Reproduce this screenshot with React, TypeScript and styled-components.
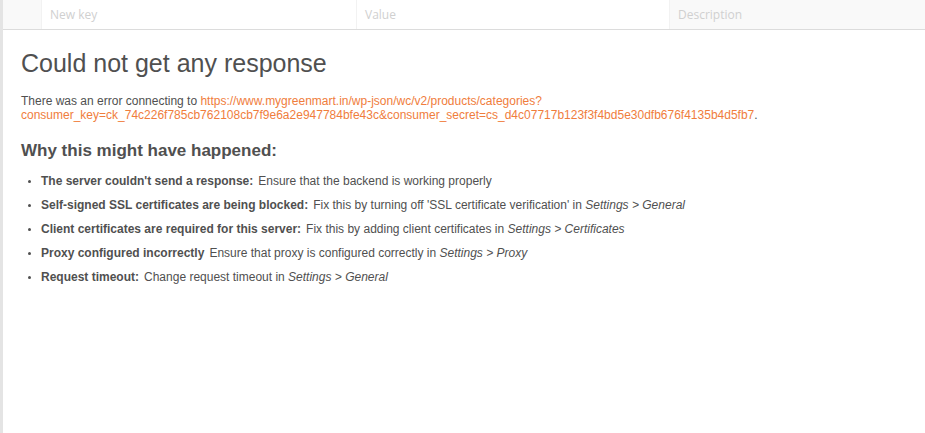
import React from 'react';
import styled, { createGlobalStyle } from 'styled-components';

const GlobalStyle = createGlobalStyle`
    html, body {
        margin: 0;
        padding: 0;
        background: #ffffff;
    }
    body {
        font-family: "Liberation Sans", Arial, sans-serif;
    }
`;

const Page = styled.div`
    display: flex;
    width: 925px;
    height: 433px;
    overflow: hidden;
    background: #ffffff;
`;

const LeftEdge = styled.div`
    width: 3px;
    flex: none;
    background: #e4e4e4;
`;

const Main = styled.div`
    flex: 1;
    display: flex;
    flex-direction: column;
    min-width: 0;
`;

const ParamsRow = styled.div`
    display: grid;
    grid-template-columns: 39px 315px 313px 1fr;
    height: 29px;
    border-bottom: 1px solid #dcdcdc;
`;

interface ICellProps {
    shaded?: boolean;
}

const ParamCell = styled.div<ICellProps>`
    display: flex;
    align-items: center;
    padding: 0 8px;
    border-right: 1px solid #f2f2f2;
    background: ${({ shaded }) => (shaded ? '#f9f9f9' : '#ffffff')};
    font-family: "Open Sans", sans-serif;
    font-size: 12px;
    color: #d0d0d0;

    &:last-child {
        border-right: none;
    }
`;

const Content = styled.div`
    padding: 18px 18px 0 18px;
    color: #505050;
`;

const Title = styled.h1`
    margin: 0 0 16px 0;
    font-size: 25px;
    font-weight: 400;
    line-height: 30px;
    color: #505050;
`;

const Message = styled.p`
    margin: 0 0 18px 0;
    font-size: 12px;
    line-height: 14px;
    color: #505050;
`;

const Link = styled.a`
    color: #f07d3c;
    text-decoration: none;
`;

const SubTitle = styled.h2`
    margin: 0 0 12px 0;
    font-size: 17px;
    font-weight: 700;
    line-height: 22px;
    color: #505050;
`;

const ReasonList = styled.ul`
    margin: 0;
    padding: 0 0 0 20px;
    font-size: 12px;
    line-height: 14px;
`;

const Reason = styled.li`
    margin-bottom: 10px;

    &::marker {
        font-size: 10px;
    }
`;

const Strong = styled.strong`
    font-weight: 700;
    margin-right: 5px;
`;

const reasons: { title: string; body: React.ReactNode }[] = [
    {
        title: "The server couldn't send a response:",
        body: 'Ensure that the backend is working properly',
    },
    {
        title: 'Self-signed SSL certificates are being blocked:',
        body: (
            <>
                Fix this by turning off 'SSL certificate verification' in <em>Settings &gt; General</em>
            </>
        ),
    },
    {
        title: 'Client certificates are required for this server:',
        body: (
            <>
                Fix this by adding client certificates in <em>Settings &gt; Certificates</em>
            </>
        ),
    },
    {
        title: 'Proxy configured incorrectly',
        body: (
            <>
                Ensure that proxy is configured correctly in <em>Settings &gt; Proxy</em>
            </>
        ),
    },
    {
        title: 'Request timeout:',
        body: (
            <>
                Change request timeout in <em>Settings &gt; General</em>
            </>
        ),
    },
];

const url =
    'https://www.mygreenmart.in/wp-json/wc/v2/products/categories?consumer_key=ck_74c226f785cb762108cb7f9e6a2e947784bfe43c&consumer_secret=cs_d4c07717b123f3f4bd5e30dfb676f4135b4d5fb7';

export default function App() {
    return (
        <Page>
            <GlobalStyle />
            <LeftEdge />
            <Main>
                <ParamsRow>
                    <ParamCell shaded />
                    <ParamCell>New key</ParamCell>
                    <ParamCell>Value</ParamCell>
                    <ParamCell shaded>Description</ParamCell>
                </ParamsRow>
                <Content>
                    <Title>Could not get any response</Title>
                    <Message>
                        There was an error connecting to <Link href={url}>{url}</Link>.
                    </Message>
                    <SubTitle>Why this might have happened:</SubTitle>
                    <ReasonList>
                        {reasons.map((r) => (
                            <Reason key={r.title}>
                                <Strong>{r.title}</Strong>
                                {r.body}
                            </Reason>
                        ))}
                    </ReasonList>
                </Content>
            </Main>
        </Page>
    );
}
